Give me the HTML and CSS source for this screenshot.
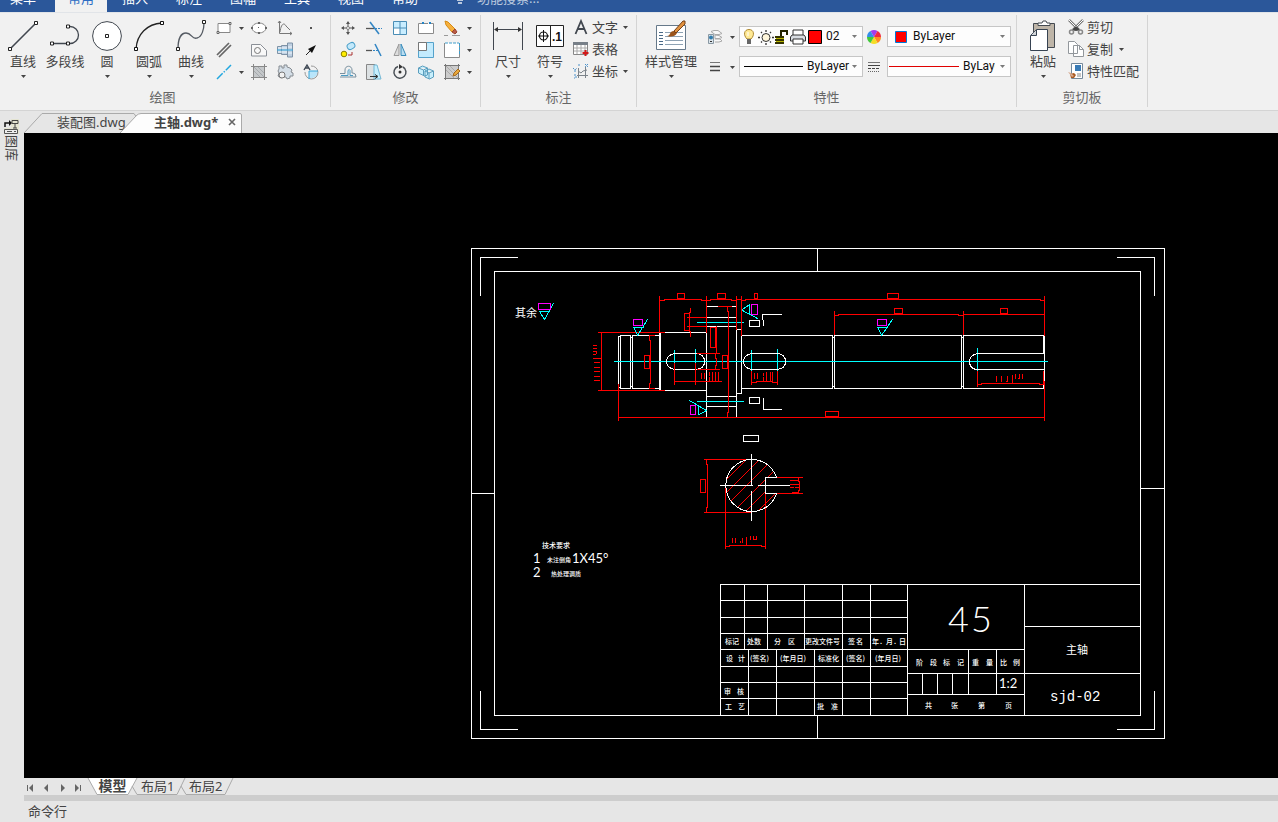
FILE: index.html
```html
<!DOCTYPE html>
<html lang="zh-CN">
<head>
<meta charset="utf-8">
<title>主轴.dwg</title>
<link rel="stylesheet" href="styles.css">
</head>
<body>
<svg class="defs" aria-hidden="true">
  <symbol id="caret" viewBox="0 0 5 3"><path d="M0 0h5L2.500 3z" fill="#444"/></symbol>
</svg>
<div class="app">
  <nav class="menu">
    <button class="menu-item menu-first">菜单</button>
    <button class="menu-item active">常用</button>
    <button class="menu-item">插入</button>
    <button class="menu-item">标注</button>
    <button class="menu-item">图幅</button>
    <button class="menu-item">工具</button>
    <button class="menu-item">视图</button>
    <button class="menu-item">帮助</button>
    <button class="menu-item menu-search"><svg width="10" height="14" viewBox="0 0 10 14"><path d="M5 0a5 5 0 0 1 3 8.500V10H2V8.500A5 5 0 0 1 5 0zM3 11h4v2H3z" fill="#b9c8de"/></svg>功能搜索...</button>
  </nav>

  <header class="ribbon">
    <section class="group">
      <div class="body draw-body">
        <button class="big"><svg width="30" height="30" viewBox="0 0 30 30"><path d="M2 28L28 2" stroke="#41474f" stroke-width="1.600"/><path d="M.5 26.500h3v3h-3zM26.500.500h3v3h-3z" fill="#fff" stroke="#222"/></svg><span>直线</span><svg class="caret"><use href="#caret"/></svg></button>
        <button class="big"><svg width="30" height="30" viewBox="0 0 30 30"><path d="M2 22.500H20a8.500 8.500 0 0 0 0-17H17" fill="none" stroke="#41474f" stroke-width="1.300"/><path d="M.5 21h3v3h-3zM16.500 21h3v3h-3zM16.500 4h3v3h-3z" fill="#fff" stroke="#222"/></svg><span>多段线</span></button>
        <button class="big"><svg width="30" height="30" viewBox="0 0 30 30"><circle cx="15" cy="15" r="14.400" fill="#fff" stroke="#41474f"/><path d="M13.500 13.500h3v3h-3z" fill="#fff" stroke="#222"/></svg><span>圆</span><svg class="caret"><use href="#caret"/></svg></button>
        <button class="big"><svg width="30" height="30" viewBox="0 0 30 30"><path d="M2 28C3 13 13 3 28 2" fill="none" stroke="#222" stroke-width="1.300"/><path d="M.5 26.500h3v3h-3zM26.500.500h3v3h-3z" fill="#fff" stroke="#111"/></svg><span>圆弧</span><svg class="caret"><use href="#caret"/></svg></button>
        <button class="big"><svg width="30" height="30" viewBox="0 0 30 30"><path d="M2 28C2 18 5 12 10 12c6 0 6 7 11 5C26 16 28 8 28 2" fill="none" stroke="#555b63" stroke-width="1.300"/><path d="M.5 26.500h3v3h-3zM26.500-.500h3v3h-3z" fill="#fff" stroke="#222"/></svg><span>曲线</span><svg class="caret"><use href="#caret"/></svg></button>
        <div class="draw-grid">
          <button class="tool wide" aria-label="矩形"><svg width="16" height="16" viewBox="0 0 16 16"><path d="M2 3.500h12v9H2z" fill="#fff" stroke="#888"/><path d="M1 11.500h2v2H1zM13 2.500h2v2h-2z" fill="#fff" stroke="#666"/></svg><svg class="caret"><use href="#caret"/></svg></button>
          <button class="tool" aria-label="椭圆"><svg width="16" height="16" viewBox="0 0 16 16"><ellipse cx="8" cy="8" rx="7" ry="5" fill="#fff" stroke="#888"/><path d="M0 7h2v2H0zM14 7h2v2h-2zM7 2h2v2H7zM7 12h2v2H7zM7 7h1v1H7z" fill="#666"/></svg></button>
          <button class="tool" aria-label="公式曲线"><svg width="16" height="16" viewBox="0 0 16 16"><path d="M2.500 1v12.500H15M1 3l1.500-2L4 3M13 12l2 1.500-2 1.500M3 12C4 4 7 2 9 6l4 4" fill="none" stroke="#777"/></svg></button>
          <button class="tool" aria-label="点"><svg width="16" height="16" viewBox="0 0 16 16"><path d="M7 7h2v2H7z" fill="#555"/></svg></button>
          <button class="tool wide" aria-label="平行线"><svg width="16" height="16" viewBox="0 0 16 16"><path d="M1 13L13 1M3 15L15 3" stroke="#666" stroke-width="1.700"/></svg></button>
          <button class="tool" aria-label="局部放大"><svg width="16" height="16" viewBox="0 0 16 16"><path d="M.5 2.500h9l6 6v5.500H.500z" fill="#f8f8f8" stroke="#8a8f96"/><circle cx="6.500" cy="8.500" r="3" fill="none" stroke="#777"/></svg></button>
          <button class="tool" aria-label="轴"><svg width="16" height="16" viewBox="0 0 16 16"><path d="M.5 4.500h4v7h-4zM4.500 3.500h6v9h-6zM10.500 1h5v14h-5z" fill="#bfd0e2" stroke="#7e92a6"/><path d="M1 6h9M1 10h9M11 5h4M11 11h4" stroke="#eef6fc"/><path d="M0 8h16" stroke="#37a9dd"/></svg></button>
          <button class="tool" aria-label="箭头"><svg width="16" height="16" viewBox="0 0 16 16"><path d="M3 13l6-6" stroke="#222"/><path d="M13 3L5 7l4 4z" fill="#111"/></svg></button>
          <button class="tool wide" aria-label="中心线"><svg width="16" height="16" viewBox="0 0 16 16"><path d="M1 15L15 1" stroke="#22a7df" stroke-width="1.500" stroke-dasharray="8 1.500 1.500 1.500"/></svg><svg class="caret"><use href="#caret"/></svg></button>
          <button class="tool" aria-label="剖面线"><svg width="16" height="16" viewBox="0 0 16 16"><path d="M2 2h12v12H2z" fill="#c5c8ca"/><path d="M2 6l8 8M2 2l12 12M6 2l8 8" stroke="#a5a9ad"/><path d="M2.500 0v16M13.500 0v16M0 2.500h16M0 13.500h16" stroke="#888"/></svg></button>
          <button class="tool" aria-label="齿形"><svg width="16" height="16" viewBox="0 0 16 16"><path d="M2 5V2h3v2h2V1h3v2l3 1 2 2-1 2 2 1v3h-3v2l-3 1-1-2H6l-2 1-3-2 1-3-1-2z" fill="#d5dfe8" stroke="#858b91"/><circle cx="5" cy="11" r="3" fill="#f1f1f1" stroke="#777"/></svg></button>
          <button class="tool" aria-label="圆弧文字"><svg width="16" height="16" viewBox="0 0 16 16"><path d="M6 7h9a7 7 0 0 1-9 7z" fill="#b9e5fa"/><path d="M8 2a6.500 6.500 0 1 1-6 6" fill="none" stroke="#999"/><path d="M6 15V7h9" fill="none" stroke="#39a6d8"/><path d="M1 6l3-5 3 5M2 4h4" fill="none" stroke="#3c4652" stroke-width="1.400"/></svg></button>
        </div>
      </div>
      <h2>绘图</h2>
    </section>

    <section class="group">
      <div class="body modify-body">
        <div class="modify-grid">
          <button class="tool" aria-label="平移"><svg width="16" height="16" viewBox="0 0 16 16"><path d="M8 2v4M8 10v4M2 8h4M10 8h4" stroke="#555"/><path d="M6 4l2-3 2 3zM6 12l2 3 2-3zM4 6L1 8l3 2zM12 6l3 2-3 2z" fill="#555"/><circle cx="8" cy="8" r="1.500" fill="#fff" stroke="#777"/></svg></button>
          <button class="tool" aria-label="裁剪"><svg width="16" height="16" viewBox="0 0 16 16"><path d="M0 8.500h8" stroke="#555" stroke-width="1.300"/><path d="M9 8.500h7" stroke="#3386c4" stroke-dasharray="2 1"/><path d="M4 2l9 12" stroke="#3386c4" stroke-width="1.500"/></svg></button>
          <button class="tool" aria-label="阵列"><svg width="16" height="16" viewBox="0 0 16 16"><path d="M1.500 1.500h13v13h-13z" fill="#c8edff" stroke="#4a8db5"/><path d="M2 8h6v6H2z" fill="#fff"/><path d="M8 1v14M1 8h14" stroke="#4a8db5"/></svg></button>
          <button class="tool" aria-label="打断"><svg width="16" height="16" viewBox="0 0 16 16"><path d="M4 3.500H.500v10h15v-10H12M6 3.500h4" fill="#fff" stroke="#8b8b8b"/><path d="M4 2h2v2H4zM11 2h2v2h-2z" fill="#2384c6"/></svg></button>
          <button class="tool wide" aria-label="删除"><svg width="16" height="16" viewBox="0 0 16 16"><path d="M1 1l3 1 7 7-3 3-6-7z" fill="#f6b03d" stroke="#d68b13"/><path d="M8 12l3-3 2 3-2 2z" fill="#b85c46" stroke="#99402e"/><path d="M0 15.500h4M8 15.500h8" stroke="#999"/></svg><svg class="caret"><use href="#caret"/></svg></button>
          <button class="tool" aria-label="平移复制"><svg width="16" height="16" viewBox="0 0 16 16"><rect x="7" y="1" width="8" height="6" rx="3" fill="#c3e9fb" stroke="#4a9fc9" transform="rotate(-30 11 4)"/><circle cx="4" cy="12" r="2.800" fill="#ffed00" stroke="#8b8000"/><path d="M8 13h4v-3" fill="none" stroke="#a33"/></svg></button>
          <button class="tool" aria-label="延伸"><svg width="16" height="16" viewBox="0 0 16 16"><path d="M0 8.500h6" stroke="#555" stroke-width="1.300"/><path d="M7 8.500h5" stroke="#3386c4" stroke-dasharray="2 1"/><path d="M9 2l6 12" stroke="#3386c4" stroke-width="1.500"/></svg></button>
          <button class="tool" aria-label="镜像"><svg width="16" height="16" viewBox="0 0 16 16"><path d="M7 2v11.500H2z" fill="#ddd" stroke="#999"/><path d="M9 2v11.500h5z" fill="#b9ddf1" stroke="#378bbb"/></svg></button>
          <button class="tool" aria-label="缩放"><svg width="16" height="16" viewBox="0 0 16 16"><path d="M.5.500h15v15H.500z" fill="#c3ebfd" stroke="#55a2cb"/><path d="M.5.500h8v8h-8z" fill="#fff" stroke="#777"/></svg></button>
          <button class="tool wide" aria-label="拉伸"><svg width="16" height="16" viewBox="0 0 16 16"><path d="M.5 1v14.500h15V1" fill="#fff" stroke="#8b8b8b"/><path d="M1 1h14M15.500 1v12" stroke="#3f9dcb" stroke-dasharray="3 1"/></svg><svg class="caret"><use href="#caret"/></svg></button>
          <button class="tool" aria-label="等距线"><svg width="16" height="16" viewBox="0 0 16 16"><path d="M0 9.500h5V6c0-5 7-5 7 0v3h1q3 0 3 4H0" fill="none" stroke="#78909f"/><path d="M1 11.500h7V6.500q1.500-2 2 0v5h3" fill="none" stroke="#4a9ac3"/></svg></button>
          <button class="tool" aria-label="倒角"><svg width="16" height="16" viewBox="0 0 16 16"><path d="M.5.500H9v15H.500z" fill="#dce1e3" stroke="#888"/><path d="M8 1h3l4 14H8z" fill="#c5effe" stroke="#75b7d4"/><path d="M4 12.500h7M9 10.500l3 2-3 2" fill="none" stroke="#333"/></svg></button>
          <button class="tool" aria-label="旋转"><svg width="16" height="16" viewBox="0 0 16 16"><path d="M6 2.500A6 6 0 1 0 11 3" fill="none" stroke="#4b5157" stroke-width="1.500"/><path d="M7 0v5l4-2z" fill="#333"/><circle cx="8" cy="8" r="1.500" fill="#333"/></svg></button>
          <button class="tool" aria-label="块"><svg width="16" height="16" viewBox="0 0 16 16"><path d="M.5 4l4-2 5 2v7l-3 1-6-3zM.500 4l5 2 4-2M5.500 6v6M7 7l4-2 4.500 2v6l-4 2-4.500-2zM7 7l4 2 4.500-2M11 9v6" fill="#c8effc" stroke="#5a9ebe"/></svg></button>
          <button class="tool wide" aria-label="编辑剖面"><svg width="16" height="16" viewBox="0 0 16 16"><path d="M2 2h12v12H2z" fill="#ccc"/><path d="M2 6l8 8M2 2l12 12M6 2l8 8" stroke="#aaa"/><path d="M1.500 0v16M14.500 0v16M0 1.500h16M0 14.500h16" stroke="#777"/><path d="M9 12l1-3 4-4 2 2-4 4z" fill="#e9a83b" stroke="#a56a1d"/></svg><svg class="caret"><use href="#caret"/></svg></button>
        </div>
      </div>
      <h2>修改</h2>
    </section>

    <section class="group">
      <div class="body note-body">
        <button class="big"><svg width="30" height="30" viewBox="0 0 30 30"><path d="M.5 1v28M29.500 1v28" stroke="#41474f"/><path d="M2 8.500h26" stroke="#41474f"/><path d="M1 8.500l4-2.500v5zM29 8.500L25 6v5z" fill="#333"/></svg><span>尺寸</span><svg class="caret"><use href="#caret"/></svg></button>
        <button class="big"><svg width="30" height="30" viewBox="0 0 30 30"><path d="M1.500 4.500h27v21h-27zM15.500 4v21" fill="#fff" stroke="#222"/><circle cx="8.500" cy="15" r="4" fill="none" stroke="#111" stroke-width="1.200"/><path d="M8.500 9v12M3 15h11" stroke="#111"/><text x="17" y="20" class="tolerance">.1</text></svg><span>符号</span><svg class="caret"><use href="#caret"/></svg></button>
        <div class="note-list">
          <button class="item"><svg width="16" height="16" viewBox="0 0 16 16"><path d="M2.500 15L8 2l5.500 13M4.500 10h7" fill="none" stroke="#41474f" stroke-width="1.800"/></svg><span>文字</span><svg class="caret"><use href="#caret"/></svg></button>
          <button class="item"><svg width="16" height="16" viewBox="0 0 16 16"><path d="M.5 1.500h14v12H.500z" fill="#fff" stroke="#888"/><path d="M0 1h15v3H0z" fill="#777f88"/><path d="M4 4v9M8 4v9M12 4v9M1 7h13M1 10h13" stroke="#aaa"/><path d="M12.500 9v6M9.500 12h6" stroke="#d21818" stroke-width="2"/></svg><span>表格</span></button>
          <button class="item"><svg width="16" height="16" viewBox="0 0 16 16"><path d="M5.500 5v10M12.500 4v11M4 12.500h11M5 8l3 2 2-2 4-1" fill="none" stroke="#7c838a"/><path d="M0 5l2 2 2-2M2 7v2M6 1v3M12 1l3 3m0-3l-3 3M1 12h2v3H1" fill="none" stroke="#4a91ca" stroke-dasharray="2 1"/></svg><span>坐标</span><svg class="caret"><use href="#caret"/></svg></button>
        </div>
      </div>
      <h2>标注</h2>
    </section>

    <section class="group">
      <div class="body prop-body">
        <button class="big style-button"><svg width="30" height="30" viewBox="0 0 30 30"><path d="M.5 4.500h29v24H.500z" fill="#fff" stroke="#66798a"/><path d="M3 11.500h4M3 14.500h4M3 17.500h4M3 20.500h4M3 23.500h4" stroke="#496986"/><path d="M9 11.500h18M9 15.500h18M9 19.500h18M9 23.500h18" stroke="#8ea2b3"/><path d="M11 15c4 0 2-5 7-5l3 2c-2 4-6 4-10 3z" fill="#9b541b"/><path d="M18 10L27 0h2v3l-9 9z" fill="#e0913e" stroke="#744018"/></svg><span>样式管理</span><svg class="caret"><use href="#caret"/></svg></button>
        <div class="prop-grid">
          <button class="tool prop-tool" aria-label="图层"><svg width="16" height="16" viewBox="0 0 16 16"><path d="M4 2.500l3-1h4l4 3-3 1H8zM8 6l4 .500 3 2-3 1H8zM8 10h5l2 2-3 1H8" fill="#f8f8f8" stroke="#aaa"/><path d="M1.500 5.500h5v9h-5z" fill="#dce5eb" stroke="#8998a3"/><circle cx="4" cy="8.500" r="2" fill="#337dad"/><path d="M3 12.500h2" stroke="#333"/></svg><svg class="caret"><use href="#caret"/></svg></button>
          <div class="combo layer-combo">
            <svg width="78" height="16" viewBox="0 0 78 16"><path d="M3 10C-1 6 0 .500 5 .500s6 5.500 2 9.500z" fill="#ffe994" stroke="#ad8831"/><path d="M3 10h4v5H3z" fill="#666"/><path d="M4 3v4" stroke="#fff"/><circle cx="22" cy="8.500" r="4" fill="#fff7dc" stroke="#333"/><path d="M22 1v2M22 14v2M14 8.500h2M28 8.500h2M17 3l1 1M26 12.500l1 1M27 3l-1 1M18 12.500l-1 1" stroke="#333" stroke-width="1.300"/><path d="M31 8h9M31 11h9M31 14h9" stroke="#343300" stroke-width="2"/><path d="M32 9.500h8M32 12.500h8" stroke="#b6b300"/><path d="M37 7V2h6v4" fill="none" stroke="#222200" stroke-width="2"/><path d="M49 6V1h10v5" fill="#fff" stroke="#333"/><path d="M48 6h12l1.500 2v4h-15V8z" fill="#d8dce1" stroke="#333"/><path d="M49 10h10v5H49z" fill="#fff" stroke="#333"/><path d="M64.500 1.500h13v13h-13z" fill="#f00" stroke="#000"/></svg>
            <select aria-label="图层选择"><option>02</option></select><svg class="caret light"><use href="#caret"/></svg>
          </div>
          <button class="tool wheel" aria-label="颜色"><svg width="14" height="14" viewBox="-7 -7 14 14"><path d="M0 0L-3.500-6A7 7 0 0 1 3.500-6z" fill="#a33bed"/><path d="M0 0L3.500-6A7 7 0 0 1 7 0z" fill="#f02942"/><path d="M0 0h7A7 7 0 0 1 3.500 6z" fill="#ff8b22"/><path d="M0 0l3.500 6a7 7 0 0 1-7 0z" fill="#f5dd24"/><path d="M0 0l-3.500 6A7 7 0 0 1-7 0z" fill="#42c83b"/><path d="M0 0h-7a7 7 0 0 1 3.500-6z" fill="#348ee8"/></svg></button>
          <div class="combo color-combo"><svg width="12" height="12" viewBox="0 0 12 12"><path d="M.5.500h11v11H.500z" fill="#f00" stroke="#0078d7"/></svg><select aria-label="颜色选择"><option>ByLayer</option></select><svg class="caret light"><use href="#caret"/></svg></div>
          <button class="tool prop-tool" aria-label="线宽"><svg width="16" height="16" viewBox="0 0 16 16"><path d="M3 3.500h10" stroke="#777"/><path d="M3 7.500h10M3 11.500h10" stroke="#444" stroke-width="1.500"/></svg><svg class="caret"><use href="#caret"/></svg></button>
          <div class="combo line-combo"><span class="line"></span><select aria-label="线宽选择"><option>ByLayer</option></select><svg class="caret light"><use href="#caret"/></svg></div>
          <button class="tool wheel" aria-label="线型"><svg width="14" height="14" viewBox="0 0 14 14"><path d="M1 2.500h12" stroke="#777"/><path d="M1 5.500h12" stroke="#444"/><path d="M1 8.500h12" stroke="#444" stroke-dasharray="3 1"/><path d="M1 11.500h12" stroke="#666" stroke-dasharray="1 1"/></svg></button>
          <div class="combo type-combo"><span class="line"></span><select aria-label="线型选择"><option>ByLayer</option></select><svg class="caret light"><use href="#caret"/></svg></div>
        </div>
      </div>
      <h2>特性</h2>
    </section>

    <section class="group">
      <div class="body clip-body">
        <button class="big"><svg width="26" height="30" viewBox="0 0 26 30"><path d="M3.500 2.500h21v24h-21z" fill="#beb5a8" stroke="#444a51"/><path d="M8 4.500V2h4l1-2h3l1 2h3v2.500z" fill="#fff" stroke="#444a51"/><path d="M6.500 8.500h11v21h-17v-15z" fill="#fff" stroke="#374352"/><path d="M6.500 9v5.500H1" fill="#d0d3d6" stroke="#374352"/></svg><span>粘贴</span><svg class="caret"><use href="#caret"/></svg></button>
        <div class="clip-list">
          <button class="item"><svg width="16" height="16" viewBox="0 0 16 16"><path d="M1 1l10 10M15 1L5 11" stroke="#777" stroke-width="2.500"/><path d="M1 1l10 10M15 1L5 11" stroke="#fff"/><path d="M4 11l4-4 4 4-4 1z" fill="#444"/><circle cx="3.500" cy="13" r="2" fill="none" stroke="#888" stroke-width="1.500"/><circle cx="12.500" cy="13" r="2" fill="none" stroke="#888" stroke-width="1.500"/></svg><span>剪切</span></button>
          <button class="item"><svg width="16" height="16" viewBox="0 0 16 16"><path d="M.5.500h6l3 3v9h-9zM5.500 4.500h6l4 4v7h-10z" fill="#fff" stroke="#92979c"/><path d="M11.500 4.500v4h4" fill="none" stroke="#92979c"/></svg><span>复制</span><svg class="caret"><use href="#caret"/></svg></button>
          <button class="item"><svg width="16" height="16" viewBox="0 0 16 16"><path d="M3.500.500h11v15h-11z" fill="#fff" stroke="#75899b"/><path d="M7 2h6v6H7z" fill="#397bb6"/><path d="M9 11h4M9 13h4" stroke="#888"/><path d="M2 11l4-1 2 2-2 3H3z" fill="#aa5a21"/><path d="M0 9l3 1 3 3-2 1z" fill="#d5aa91"/></svg><span>特性匹配</span></button>
        </div>
      </div>
      <h2>剪切板</h2>
    </section>
  </header>

  <div class="work">
    <aside class="side">
      <button class="library"><svg width="15" height="15" viewBox="0 0 15 15"><path d="M7 0h8v15H0V9h7z" fill="#e4e4d2"/><path d="M1 8V4h5" fill="none" stroke="#111" stroke-width="1.500"/><path d="M5 1l3 3-3 3z" fill="#111"/><path d="M8 1.500h6v3H8zM11 5v4M9 9h4" fill="none" stroke="#444"/><path d="M.5 10.500h13v4H.500z" fill="#eee" stroke="#555"/><path d="M3 12.500h5M10 12.500h2" stroke="#555"/></svg><span>图库</span></button>
    </aside>
    <div class="editor">
      <div class="doc-tabs">
        <button class="doc-tab"><svg class="shape" viewBox="0 0 112 20" preserveAspectRatio="none"><path d="M0 20L18 .500h92l2 3" fill="none" stroke="#aaa"/></svg><span>装配图.dwg</span></button>
        <button class="doc-tab current"><svg class="shape" viewBox="0 0 122 20" preserveAspectRatio="none"><path d="M0 20L16 3q2-2.500 5-2.500h99q1.500 0 1.500 1.500v18" fill="#fdfdfd" stroke="#aaa"/></svg><span>主轴.dwg*</span><svg class="close" width="8" height="8" viewBox="0 0 8 8"><path d="M1 1l6 6M7 1L1 7" stroke="#666" stroke-width="1.600"/></svg></button>
      </div>
      <main class="canvas">
        <svg class="drawing" viewBox="24 133 1254 645" preserveAspectRatio="xMinYMin meet" role="img" aria-label="主轴零件图">
          <defs><clipPath id="section"><path d="M776 477A26 26 0 1 0 776 493H765V477z"/></clipPath></defs>
          <g transform="translate(.5 .5)" class="plot">
            <g class="white">
              <path d="M471 248H1164V738H471zM494 271H1140V715H494zM817 248V271M817 715V738M471 493H494M1140 488H1164"/>
              <path d="M517 257H480V295M480 691V729H517M1117 257H1154V295M1154 691V729H1117"/>
              <path d="M720 715V584H1140M720 600H907M720 617H907M720 633H907M720 649H1024M720 666H907M720 682H907M720 698H907M744 584V649M767 584V649M804 584V649M842 584V715M870 584V715M907 584V715M748 649V715M776 649V715M814 649V715"/>
              <path d="M1024 584V715M1024 626H1140M907 673H1140M907 694H1024M968 649V694M996 649V694M922 673V694M937 673V694M952 673V694"/>
              <path d="M618 384V336H620M618 387H620M620 335H630V388H620zM630 337H632M630 386H632M659 335H632V388H659M659 332V390M660 332V390M664 332H706M664 390H706M706 332V416M707 306H736M706 317H736M706 326H736M736 329V416M706 396H736M706 406H736M736 329H741V393H736M741 335H832V388H741M832 337H834M832 386H834M834 335H961V388H834zM961 337H963M961 386H963M1043 335H963V388H1043V385M1043 335V353M1044 336V381"/>
            </g>
            <path class="cyan" d="M614 361H1047M697 322H743M697 401H743M674 350V362M695 349V362M751 350V370M777 349V370M977 348V370"/>
            <path class="white" d="M674 353H696Q704 354 704 361T696 369H674Q666 367 666 361T674 353zM751 353H777Q785 354 785 361T777 369H751Q743 367 743 361T751 353zM1043 353H977Q969 355 969 361T975 369H1043"/>
            <g class="red">
              <path d="M659 296V332M706 296V332M736 296V329M741 296V335M1044 296V335M659 300H664V299H701V300H710V299H731V300H736M736 299H741V300H745V299H1040V300H1044"/>
              <path d="M677 293H684V298H677zM717 293H725V298H717zM754 293H757V298H754zM887 293H898V298H887zM894 308H902V313H894zM1000 308H1007V313H1000z"/>
              <path d="M834 311V334M963 311V334M834 315H838V314H958V315H963V314H1044"/>
              <path d="M598 332H664M598 390H664M601 332V390M593 345H596M593 348H596M593 351H596V353M593 354H595M593 358H601M594 362H599M594 367H599M594 371H599M594 376H599M594 380H599"/>
              <path d="M649 335V340H650V383H649V388M650 335H654M650 388H654M644 355H649V368H644zM618 384V420M618 417H1044M1044 381V420M825 411H838V416H825z"/>
              <path d="M684 313H689V330H684zM690 308V312H689V331H690V336M687 317H706M687 326H706M710 327H715V347H710zM716 326V353H715V358H716V365H715V369M697 353H719M697 369H719M722 355H727V368H722zM718 306H731M727 306V311H728V412H727V416"/>
              <path d="M674 363V384M695 363V384M674 381H721M701 373V378M704 373V378M709 372V375M709 377V381M712 372V381M715 372V380M718 372V381"/>
              <path d="M751 371V384M777 371V384M751 382H756V381H772V382H777M754 373V378M757 373V378M763 373V375M763 377V380M766 372V381M770 372V380M772 372V381"/>
              <path d="M977 371V386M1043 371V384M977 384H981V383H1039V384H1043M996 376V381M1001 376V381M1007 376V381H1006M1012 375V383M1015 374V378M1019 374V378H1018M1022 374V378"/>
            </g>
            <path class="cyan" d="M633 327H643M634 328L637 335L647 319M539 311H549M539 311L544 319L553 303M877 327H887M878 328L881 335L892 319M742 309L749 304V314M742 310L757 318M689 400L706 410L699 414M698 406V414"/>
            <path class="magenta" d="M633 319H642V325H633zM538 303H550V309H538zM877 319H886V325H877zM751 304H757V314H751zM690 405H695V414H690z"/>
            <path class="white" d="M749 320H759V326H749zM749 397H759V403H749zM762 319V314H781M763 320V325M763 398V409H781M743 435H758V441H743z"/>
            <path class="red" clip-path="url(#section)" d="M720 485L760 445M720 498L780 438M720 511L790 441M724 520L790 454M736 520L790 466M748 520L790 478"/>
            <path class="red" d="M704 459H751M704 512H751M706 459V464H707V507H706V512M700 479H705V492H700zM725 485V548M765 493V548M725 546H729V545H761V546H765M732 538V542M735 538V542M740 541V542M742 538V542M746 537V545M750 536V539M753 536V539M756 536V539H753M776 477H802M776 493H802M798 477V481H799V490H798V493M790 480H798M790 484H798M790 487H793M795 487H799M792 492H797"/>
            <path class="white" d="M776 477A26 26 0 1 0 776 493H765V477H776M751 454V485M751 491V520M720 485H752M758 485H789"/>
          </g>
          <g class="notes">
            <text x="515" y="317" class="t11">其余</text>
            <text x="542" y="548">技术要求</text>
            <text x="533" y="563" class="t13">1</text><text x="547" y="562" class="t6">未注倒角</text><text x="572" y="563" class="t13">1X45°</text>
            <text x="533" y="577" class="t13">2</text><text x="551" y="576" class="t6">热处理调质</text>
            <text x="725" y="644">标记</text><text x="747" y="644">处数</text><text x="774 788" y="644">分区</text><text x="805" y="644">更改文件号</text><text x="848 856" y="644">签名</text><text x="872 880 886 894 899" y="644">年.月.日</text>
            <text x="726 738" y="661">设计</text><text x="750" y="661">(签名)</text><text x="780" y="661">(年月日)</text><text x="818" y="661">标准化</text><text x="846" y="661">(签名)</text><text x="875" y="661">(年月日)</text>
            <text x="724 737" y="694">审核</text><text x="725 738" y="709">工艺</text><text x="817 831" y="709">批准</text>
            <text x="916 930 943 957" y="665">阶段标记</text><text x="972 986" y="665">重量</text><text x="1000 1013" y="665">比例</text>
            <text x="999" y="688" class="t13">1:2</text>
            <text x="925 951 978 1005" y="708">共张第页</text>
            <text x="948 971" y="632" class="t36">45</text>
            <text x="1066" y="654" class="t11">主轴</text>
            <text x="1050" y="701" class="mono">sjd-02</text>
          </g>
        </svg>
      </main>
      <footer class="sheets">
        <button class="step" aria-label="第一页"><svg width="8" height="8" viewBox="0 0 8 8"><path d="M1.500 1v6" stroke="#666"/><path d="M7 0v8L3 4z" fill="#666"/></svg></button>
        <button class="step" aria-label="上一页"><svg width="8" height="8" viewBox="0 0 8 8"><path d="M6 0v8L2 4z" fill="#666"/></svg></button>
        <button class="step" aria-label="下一页"><svg width="8" height="8" viewBox="0 0 8 8"><path d="M3 0v8l4-4z" fill="#666"/></svg></button>
        <button class="step" aria-label="最后一页"><svg width="8" height="8" viewBox="0 0 8 8"><path d="M1 0v8l4-4z" fill="#666"/><path d="M6.500 1v6" stroke="#666"/></svg></button>
        <button class="sheet selected"><svg class="shape" viewBox="0 0 49 17"><path d="M0 0l9 16.500h31L49 0z" fill="#fff"/><path d="M0 0l9 16.500h31L49 0" fill="none" stroke="#aaa"/></svg><span>模型</span></button>
        <button class="sheet"><svg class="shape" viewBox="0 0 48 17"><path d="M-5 8l5 8.500h40L48 0" fill="none" stroke="#aaa"/></svg><span>布局1</span></button>
        <button class="sheet"><svg class="shape" viewBox="0 0 48 17"><path d="M-4 8l5 8.500h39L48 0" fill="none" stroke="#aaa"/></svg><span>布局2</span></button>
      </footer>
      <div class="splitter"></div>
      <div class="command">命令行</div>
    </div>
  </div>
</div>
</body>
</html>
```
FILE: styles.css
```css
* { box-sizing: border-box; }
html, body { height: 100%; margin: 0; }
body {
  font: 13px/20px "Noto Sans", "Noto Sans CJK SC", sans-serif;
  color: #444;
  background: #e6e6e6;
  overflow: hidden;
}
button {
  margin: 0; padding: 0; border: 0;
  background: none; color: inherit; font: inherit;
  white-space: nowrap;
}
svg { display: block; flex: none; overflow: visible; }
.defs { position: absolute; width: 0; height: 0; }
.caret { width: 5px; height: 3px; }
.app { height: 100vh; display: flex; flex-direction: column; }

.menu {
  flex: none; height: 12px; overflow: hidden;
  display: flex; align-items: flex-end; gap: 2px;
  background: #2b579a; color: #fff;
}
.menu-item { flex: none; width: 52px; height: 28px; }
.menu-first { width: 46px; margin-right: 7px; }
.menu-item.active { background: #f1f1f1; color: #2b6cc4; }
.menu-search {
  width: auto; margin-left: 22px; color: #b9c8de;
  display: flex; align-items: center; gap: 12px;
}

.ribbon {
  flex: none; display: flex;
  background: #f1f1f1;
  border-top: 1px solid #e1e4e8; border-bottom: 1px solid #d4d4d4;
}
.group { position: relative; flex: none; padding: 0 1px 3px 0; }
.group::after {
  content: ""; position: absolute; right: 0; top: 2px; bottom: 3px;
  width: 1px; background: #d4d4d4;
}
.group h2 { margin: 0; font: inherit; color: #666; text-align: center; }
.draw-body + h2 { padding-right: 5px; }
.body { height: 74px; display: flex; }
.big {
  width: 42px; padding-top: 8px;
  display: flex; flex-direction: column; align-items: center; justify-content: flex-start;
}
.big .caret { margin-top: 4px; }
.tool { height: 22px; display: flex; align-items: center; justify-content: center; }
.tool.wide { justify-content: flex-start; padding-left: 5px; gap: 7px; }
.draw-body { padding: 0 6px 0 2px; }
.draw-grid, .modify-grid { display: grid; grid-auto-rows: 22px; padding-top: 4px; }
.draw-grid { grid-template-columns: 34px 26px 26px 26px; }
.draw-grid .wide { padding-left: 4px; }
.modify-body { padding: 0 6px 0 4px; }
.modify-grid { grid-template-columns: repeat(4, 26px) 35px; }
.note-body { padding: 0 3px 0 6px; }
.note-list, .clip-list { padding-top: 3px; }
.note-list { width: 60px; margin-left: 2px; }
.item { width: 100%; height: 22px; display: flex; align-items: center; gap: 3px; }
.item .caret { margin-left: 2px; }
.tolerance { font: bold 12px "Liberation Sans", sans-serif; fill: #111; }
.prop-body { padding: 0 5px 0 8px; }
.style-button { width: 52px; }
.prop-grid {
  margin-left: 8px; padding-top: 13px;
  display: grid; grid-template-columns: 34px 124px 24px 124px; grid-auto-rows: 21px; row-gap: 9px;
}
.prop-tool { justify-content: flex-start; gap: 7px; padding-left: 2px; }
.wheel { justify-content: center; padding-right: 2px; }
.combo {
  display: flex; align-items: center; padding: 0 5px 0 4px;
  background: #fdfdfd; border: 1px solid #c6c6c6; overflow: hidden;
}
.combo select {
  appearance: none; flex: 1; min-width: 0; height: 19px;
  margin: 0 0 0 7px; padding: 0; border: 0; border-radius: 0;
  background: none; color: #111;
  font: 12px/19px Roboto, sans-serif;
}
.light { opacity: 0.7; }
.layer-combo select { margin-left: 4px; }
.color-combo { padding-left: 7px; }
.color-combo select { margin-left: 6px; }
.line { flex: none; height: 1px; width: 59px; background: #000; }
.line-combo select { margin-left: 4px; }
.type-combo { padding-left: 1px; }
.type-combo .line { width: 70px; background: #e00000; }
.type-combo select { margin: 0 5px 0 4px; }
.clip-body { padding: 0 7px 0 5px; }
.clip-list { width: 72px; margin-left: 4px; }
.clip-list .caret { margin-left: 3px; }

.work { flex: 1; min-height: 0; display: flex; }
.side { flex: none; width: 24px; padding: 8px 0 0 4px; }
.library { display: flex; flex-direction: column; align-items: flex-start; gap: 1px; }
.library span { writing-mode: vertical-rl; text-orientation: sideways; line-height: 15px; }
.editor { flex: 1; min-width: 0; display: flex; flex-direction: column; }
.doc-tabs { flex: none; height: 22px; padding-top: 2px; display: flex; }
.doc-tab {
  position: relative; width: 112px; height: 20px; padding: 0 0 2px 33px;
  line-height: 18px; text-align: left;
}
.doc-tab span, .sheet span { position: relative; }
.current {
  width: 122px; margin-left: -16px; padding: 0 6px 2px 34px; font-weight: 700;
  display: flex; align-items: center; justify-content: space-between;
}
.shape { position: absolute; left: 0; top: 0; width: 100%; height: 100%; }
.close { position: relative; }
.canvas { flex: 1; min-height: 0; background: #000; overflow: hidden; }
.drawing { width: 100%; height: 100%; }
.plot { fill: none; shape-rendering: crispEdges; stroke-linecap: square; }
.white { stroke: #fff; }
.red { stroke: #f00; }
.cyan { stroke: #0ff; }
.magenta { stroke: #f0f; }
.notes { fill: #fff; font: 500 7px "Noto Sans CJK SC", sans-serif; }
.t6 { font-size: 6px; }
.t11 { font-size: 11px; font-weight: 400; }
.t13 { font: 13px "Lato", sans-serif; }
.t36 { font: 300 36px "Lato", sans-serif; }
.mono { font: 14px "Liberation Mono", monospace; }

.sheets { flex: none; height: 17px; padding-left: 2px; display: flex; align-items: center; }
.step { width: 16px; display: flex; }
.step svg { margin-top: 2px; }
.sheet {
  position: relative; width: 48px; height: 17px; padding: 0 0 2px 4px;
  line-height: 14px; text-align: left;
}
.selected {
  width: 49px; margin-left: -2px; padding-left: 0;
  font-size: 14px; font-weight: 700; text-align: center;
}
.splitter { flex: none; height: 6px; background: #cdcdcd; }
.command { flex: none; height: 21px; padding-left: 4px; line-height: 20px; }
```
